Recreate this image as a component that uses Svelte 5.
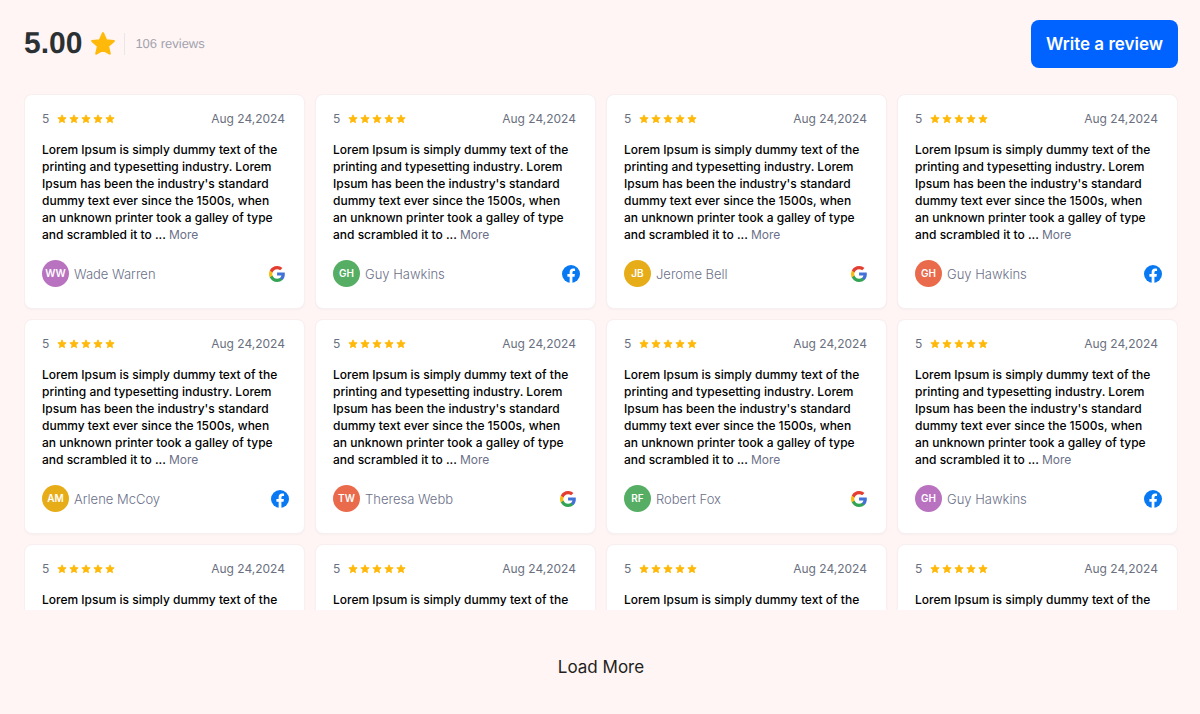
<script>
	const colors = {
		purple: '#b972bf',
		green: '#55ae63',
		yellow: '#e7ad19',
		red: '#ea6a4c'
	};

	const text =
		"Lorem Ipsum is simply dummy text of the printing and typesetting industry. Lorem Ipsum has been the industry's standard dummy text ever since the 1500s, when an unknown printer took a galley of type and scrambled it to ...";

	const reviews = [
		{ name: 'Wade Warren', color: colors.purple, source: 'google' },
		{ name: 'Guy Hawkins', color: colors.green, source: 'facebook' },
		{ name: 'Jerome Bell', color: colors.yellow, source: 'google' },
		{ name: 'Guy Hawkins', color: colors.red, source: 'facebook' },
		{ name: 'Arlene McCoy', color: colors.yellow, source: 'facebook' },
		{ name: 'Theresa Webb', color: colors.red, source: 'google' },
		{ name: 'Robert Fox', color: colors.green, source: 'google' },
		{ name: 'Guy Hawkins', color: colors.purple, source: 'facebook' },
		{ name: 'Wade Warren', color: colors.purple, source: 'google' },
		{ name: 'Guy Hawkins', color: colors.green, source: 'facebook' },
		{ name: 'Jerome Bell', color: colors.yellow, source: 'google' },
		{ name: 'Guy Hawkins', color: colors.red, source: 'facebook' }
	];

	function initials(name) {
		return name
			.split(' ')
			.map((word) => word[0])
			.join('');
	}
</script>

{#snippet star()}
	<svg class="star" viewBox="0 0 24 24" aria-hidden="true">
		<path
			d="M12 2l2.900 6.500 7.100.7-5.400 4.700 1.600 7L12 17.300l-6.200 3.600 1.600-7L2 9.200l7.100-.7z"
			stroke="#ffb90a"
			stroke-width="2"
			stroke-linejoin="round"
		/>
	</svg>
{/snippet}

<main class="reviews">
	<header class="reviews__header">
		<div class="summary">
			<span class="summary__score">5.00</span>
			<span class="summary__star">{@render star()}</span>
			<span class="summary__count">106 reviews</span>
		</div>
		<button type="button" class="write-btn">Write a review</button>
	</header>

	<div class="reviews__list">
		{#each reviews as review}
			<article class="card">
				<div class="card__top">
					<span class="card__score">5</span>
					<span class="card__stars">
						{#each Array(5) as _}
							{@render star()}
						{/each}
					</span>
					<time class="card__date" datetime="2024-08-24">Aug 24,2024</time>
				</div>
				<p class="card__text">{text} <button type="button" class="more-btn">More</button></p>
				<div class="card__author">
					<span class="avatar" style:background-color={review.color}>{initials(review.name)}</span>
					<span class="card__name">{review.name}</span>
					{#if review.source == 'google'}
						<svg class="google" viewBox="0 0 48 48" role="img" aria-label="Google">
							<path
								fill="#4272d7"
								d="M47.5 24.5c0-1.6-.2-3.2-.4-4.7H24.2v9h13.1c-.6 3-2.3 5.600-4.900 7.300v6h7.900c4.600-4.200 7.200-10.500 7.200-17.600z"
							/>
							<path
								fill="#33a354"
								d="M24.200 48c6.600 0 12.100-2.200 16.100-5.900l-7.900-6c-2.200 1.500-5 2.300-8.200 2.300-6.300 0-11.700-4.300-13.600-10H2.500v6.200C6.500 42.600 14.700 48 24.200 48z"
							/>
							<path
								fill="#f8bc15"
								d="M10.600 28.400c-1-2.900-1-6 0-8.900v-6.200H2.500c-3.400 6.700-3.400 14.600 0 21.300z"
							/>
							<path
								fill="#e43e31"
								d="M24.200 9.500c3.500-.1 6.800 1.300 9.300 3.600l6.900-6.900C36 2.100 30.200-.1 24.200 0 14.700 0 6.500 5.300 2.500 13.300l8.100 6.200c1.900-5.700 7.300-10 13.600-10z"
							/>
						</svg>
					{:else}
						<svg class="facebook" viewBox="0 0 24 24" role="img" aria-label="Facebook">
							<circle cx="12" cy="12" r="12" fill="#0879f3" />
							<path
								fill="#fff"
								d="M16.700 15.500l.5-3.500h-3.300V9.800c0-1 .5-1.900 2-1.900h1.500v-3s-1.400-.2-2.700-.2c-2.700 0-4.500 1.600-4.500 4.700V12h-3v3.500h3v8.400a12 12 0 0 0 3.700 0v-8.400z"
							/>
						</svg>
					{/if}
				</div>
			</article>
		{/each}
	</div>

	<button type="button" class="load-btn">Load More</button>
</main>

<style>
	:global(body) {
		margin: 0;
		background: #fff5f5;
	}
	button {
		border: none;
		padding: 0;
		background: transparent;
		font-family: inherit;
		cursor: pointer;
	}
	.reviews {
		box-sizing: border-box;
		min-height: 100vh;
		display: flex;
		flex-direction: column;
		padding: 20px 22px 32px 24px;
		font-family: Inter, 'Liberation Sans', sans-serif;
	}
	.reviews__header {
		display: flex;
		align-items: center;
		justify-content: space-between;
		margin-bottom: 26px;
	}
	.summary {
		display: flex;
		align-items: center;
		font-family: 'Liberation Sans', Arial, sans-serif;
		text-rendering: geometricPrecision;
	}
	.summary__score {
		font-size: 30px;
		font-weight: 700;
		line-height: 36px;
		color: #2b3033;
	}
	.summary__star {
		width: 26px;
		height: 26px;
		margin: 0 8px;
	}
	.summary__count {
		padding-left: 10px;
		border-left: 1px solid #eae5e9;
		font-size: 13px;
		line-height: 22px;
		color: #a2a3ad;
	}
	.star {
		display: block;
		width: 100%;
		height: 100%;
		fill: #ffb90a;
	}
	.write-btn {
		height: 48px;
		padding: 0 15px;
		border-radius: 8px;
		background: #0062ff;
		color: #fff;
		font-size: 17px;
		font-weight: 600;
	}
	.reviews__list {
		display: grid;
		grid-template-columns: repeat(4, 1fr);
		gap: 10px;
		max-height: 516px;
		overflow: hidden;
	}
	.card {
		padding: 15px 19px 21px 17px;
		border: 1px solid #f8eff0;
		border-radius: 8px;
		background: #fff;
		box-shadow: 0 1px 2px #f7eeef;
	}
	.card__top {
		display: flex;
		align-items: center;
		font-size: 12px;
		line-height: 18px;
		color: #6b7080;
	}
	.card__stars {
		display: flex;
		gap: 2px;
		margin-left: 8px;
	}
	.card__stars .star {
		width: 10px;
		height: 10px;
	}
	.card__date {
		margin-left: auto;
	}
	.card__text {
		margin: 13px 0 17px;
		font-size: 12px;
		font-weight: 500;
		line-height: 17px;
		color: #000;
	}
	.more-btn {
		font-size: 12px;
		line-height: 17px;
		color: #6b7089;
	}
	.card__author {
		display: flex;
		align-items: center;
	}
	.avatar {
		width: 27px;
		height: 27px;
		border-radius: 50%;
		color: #fff;
		font-size: 10px;
		font-weight: 600;
		line-height: 27px;
		text-align: center;
	}
	.card__name {
		margin: 0 auto 0 5px;
		font-size: 13px;
		font-weight: 300;
		color: #6b7089;
	}
	.google {
		width: 16px;
		height: 16px;
	}
	.facebook {
		width: 18px;
		height: 18px;
		margin-right: -4px;
	}
	.load-btn {
		align-self: center;
		margin-top: 44px;
		font-size: 17px;
		line-height: 26px;
		color: #231f20;
	}
</style>
